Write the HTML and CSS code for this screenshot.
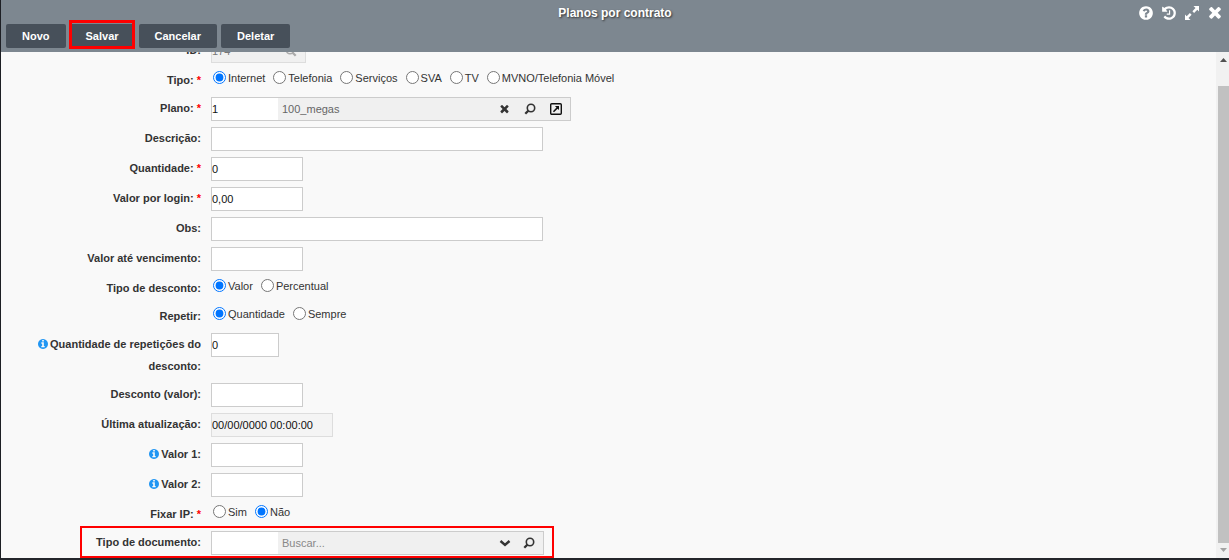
FILE: index.html
```
<!DOCTYPE html>
<html lang="pt-BR">
<head>
<meta charset="utf-8">
<title>Planos por contrato</title>
<link rel="stylesheet" href="styles.css">
</head>
<body>
<svg class="defs" aria-hidden="true">
  <symbol id="search" viewBox="0 0 12 12"><circle cx="7" cy="5" r="3.7" fill="none" stroke="currentColor" stroke-width="1.6"/><path d="M4.4 7.6 1.3 10.7" stroke="currentColor" stroke-width="2.2"/></symbol>
  <symbol id="search-right" viewBox="0 0 12 12"><circle cx="5" cy="5" r="3.7" fill="none" stroke="currentColor" stroke-width="1.6"/><path d="M7.6 7.6 10.700 10.700" stroke="currentColor" stroke-width="2.2"/></symbol>
  <symbol id="times" viewBox="256 368 1280 1312"><path fill="currentColor" d="M1490 1322q0 40-28 68l-136 136q-28 28-68 28t-68-28l-294-294-294 294q-28 28-68 28t-68-28l-136-136q-28-28-28-68t28-68l294-294-294-294q-28-28-28-68t28-68l136-136q28-28 68-28t68 28l294 294 294-294q28-28 68-28t68 28l136 136q28 28 28 68t-28 68l-294 294 294 294q28 28 28 68z"/></symbol>
  <symbol id="info" viewBox="128 128 1536 1536"><path fill="currentColor" d="M1152 1376v-160q0-14-9-23t-23-9h-96v-512q0-14-9-23t-23-9h-320q-14 0-23 9t-9 23v160q0 14 9 23t23 9h96v320h-96q-14 0-23 9t-9 23v160q0 14 9 23t23 9h448q14 0 23-9t9-23zm-128-896v-160q0-14-9-23t-23-9h-192q-14 0-23 9t-9 23v160q0 14 9 23t23 9h192q14 0 23-9t9-23zm640 416q0 209-103 385.500t-279.500 279.500-385.500 103-385.500-103-279.500-279.500-103-385.500 103-385.500 279.500-279.500 385.500-103 385.500 103 279.500 279.500 103 385.500z"/></symbol>
</svg>
<div class="window">
  <header class="header">
    <div class="titlebar">
      <h1 class="title">Planos por contrato</h1>
      <div class="tools">
        <button class="tool" type="button" aria-label="Ajuda"><svg viewBox="0 0 1792 1792"><path fill="currentColor" d="M1024 1376v-192q0-14-9-23t-23-9h-192q-14 0-23 9t-9 23v192q0 14 9 23t23 9h192q14 0 23-9t9-23zm256-672q0-88-55.500-163t-138.500-116-170-41q-243 0-371 213-15 24 8 42l132 100q7 6 19 6 16 0 25-12 53-68 86-92 34-24 86-24 48 0 85.500 26t37.500 59q0 38-20 61t-68 45q-63 28-115.500 86.500t-52.500 125.500v36q0 14 9 23t23 9h192q14 0 23-9t9-23q0-19 21.500-49.500t54.500-49.500q32-18 49-28.500t46-35 44.500-48 28-60.500 12.500-81zm384 192q0 209-103 385.500t-279.500 279.500-385.500 103-385.500-103-279.500-279.500-103-385.500 103-385.500 279.500-279.500 385.500-103 385.500 103 279.500 279.500 103 385.500z"/></svg></button>
        <button class="tool" type="button" aria-label="Histórico"><svg viewBox="0 0 1792 1792"><path fill="currentColor" d="M1664 896q0 156-61 298t-164 245-245 164-298 61q-172 0-327-72.500t-264-204.500q-7-10-6.500-22.500t8.500-20.500l137-138q10-9 25-9 16 2 23 12 73 95 179 147t225 52q104 0 198.500-40.500t163.500-109.500 109.500-163.500 40.500-198.500-40.500-198.500-109.500-163.500-163.500-109.500-198.500-40.500q-98 0-188 35.500t-160 101.500l137 138q31 30 14 69-17 40-59 40h-448q-26 0-45-19t-19-45v-448q0-42 40-59 39-17 69 14l130 129q107-101 244.500-156.500t284.500-55.500q156 0 298 61t245 164 164 245 61 298zm-640-288v448q0 14-9 23t-23 9h-320q-14 0-23-9t-9-23v-64q0-14 9-23t23-9h224v-352q0-14 9-23t23-9h64q14 0 23 9t9 23z"/></svg></button>
        <button class="tool" type="button" aria-label="Expandir"><svg viewBox="0 0 16 16"><path fill="currentColor" d="M9.500 1H15v5.500l-1.700-1.700-3.200 3.200-1.700-1.700 3.100-3.200zM6.500 15H1V9.500l1.700 1.700L5.900 8l1.700 1.700-3.100 3.200z"/></svg></button>
        <button class="tool" type="button" aria-label="Fechar"><svg viewBox="0 0 16 16"><use href="#times" x="1" y="2" width="14" height="13"/></svg></button>
      </div>
    </div>
    <div class="actions">
      <button class="action" type="button">Novo</button>
      <button class="action marked" type="button">Salvar</button>
      <button class="action" type="button">Cancelar</button>
      <button class="action" type="button">Deletar</button>
    </div>
  </header>
  <main class="content">
    <form class="form">
      <div class="row">
        <label class="label" for="id">ID:</label>
        <div class="combo small"><input class="value" id="id" value="174" disabled><button class="icon" type="button" disabled aria-label="Buscar ID"><svg><use href="#search-right"/></svg></button></div>
      </div>
      <div class="row" role="radiogroup" aria-labelledby="tipo">
        <span class="label" id="tipo">Tipo: <b class="req">*</b></span>
        <div class="options">
          <label class="option"><input type="radio" name="tipo" checked>Internet</label>
          <label class="option"><input type="radio" name="tipo">Telefonia</label>
          <label class="option"><input type="radio" name="tipo">Serviços</label>
          <label class="option"><input type="radio" name="tipo">SVA</label>
          <label class="option"><input type="radio" name="tipo">TV</label>
          <label class="option"><input type="radio" name="tipo">MVNO/Telefonia Móvel</label>
        </div>
      </div>
      <div class="row">
        <label class="label" for="plano">Plano: <b class="req">*</b></label>
        <div class="combo wide">
          <input class="code" id="plano" value="1"><input class="value" aria-label="Nome do plano" value="100_megas" readonly>
          <button class="icon" type="button" aria-label="Limpar"><svg viewBox="0 0 12 12"><use href="#times" x="2" y="2" width="9" height="9"/></svg></button>
          <button class="icon" type="button" aria-label="Buscar plano"><svg><use href="#search"/></svg></button>
          <button class="icon" type="button" aria-label="Abrir plano"><svg viewBox="0 0 12 12"><rect x=".7" y=".7" width="10.600" height="10.600" rx="1" fill="none" stroke="#111" stroke-width="1.400"/><path fill="#111" d="M4.900 3h4.100v4.100L7.600 5.700 4 9.300 2.900 8.200l3.600-3.600z"/></svg></button>
        </div>
      </div>
      <div class="row"><label class="label" for="descricao">Descrição:</label><input class="field long" id="descricao"></div>
      <div class="row"><label class="label" for="quantidade">Quantidade: <b class="req">*</b></label><input class="field" id="quantidade" value="0"></div>
      <div class="row"><label class="label" for="login">Valor por login: <b class="req">*</b></label><input class="field" id="login" value="0,00"></div>
      <div class="row"><label class="label" for="obs">Obs:</label><input class="field long" id="obs"></div>
      <div class="row"><label class="label" for="vencimento">Valor até vencimento:</label><input class="field" id="vencimento"></div>
      <div class="row" role="radiogroup" aria-labelledby="tipo-desconto">
        <span class="label" id="tipo-desconto">Tipo de desconto:</span>
        <div class="options">
          <label class="option"><input type="radio" name="desconto" checked>Valor</label>
          <label class="option"><input type="radio" name="desconto">Percentual</label>
        </div>
      </div>
      <div class="row" role="radiogroup" aria-labelledby="repetir">
        <span class="label" id="repetir">Repetir:</span>
        <div class="options">
          <label class="option"><input type="radio" name="repetir" checked>Quantidade</label>
          <label class="option"><input type="radio" name="repetir">Sempre</label>
        </div>
      </div>
      <div class="row"><label class="label" for="repeticoes"><svg class="info"><use href="#info"/></svg>Quantidade de repetições do desconto:</label><input class="field short" id="repeticoes" value="0"></div>
      <div class="row"><label class="label" for="desconto-valor">Desconto (valor):</label><input class="field" id="desconto-valor"></div>
      <div class="row"><label class="label" for="atualizacao">Última atualização:</label><input class="field date" id="atualizacao" value="00/00/0000 00:00:00" readonly></div>
      <div class="row"><label class="label" for="valor1"><svg class="info"><use href="#info"/></svg>Valor 1:</label><input class="field" id="valor1"></div>
      <div class="row"><label class="label" for="valor2"><svg class="info"><use href="#info"/></svg>Valor 2:</label><input class="field" id="valor2"></div>
      <div class="row" role="radiogroup" aria-labelledby="fixar">
        <span class="label" id="fixar">Fixar IP: <b class="req">*</b></span>
        <div class="options">
          <label class="option"><input type="radio" name="fixar">Sim</label>
          <label class="option"><input type="radio" name="fixar" checked>Não</label>
        </div>
      </div>
      <div class="row highlighted">
        <label class="label" for="documento">Tipo de documento:</label>
        <div class="combo">
          <input class="code" id="documento"><input class="value" aria-label="Buscar tipo de documento" placeholder="Buscar...">
          <button class="icon" type="button" aria-label="Abrir lista"><svg viewBox="0 0 12 12"><path d="M1.500 4 6 8l4.500-4" fill="none" stroke="currentColor" stroke-width="2.400"/></svg></button>
          <button class="icon" type="button" aria-label="Buscar documento"><svg><use href="#search"/></svg></button>
        </div>
      </div>
    </form>
    <div class="scrollbar" aria-hidden="true">
      <svg class="arrow" viewBox="0 0 7 4"><path d="M0 4 3.500 0 7 4z" fill="#505050"/></svg>
      <div class="thumb"></div>
      <svg class="arrow" viewBox="0 0 7 4"><path d="M0 0 3.500 4 7 0z" fill="#a3a3a3"/></svg>
    </div>
  </main>
</div>
</body>
</html>
```
FILE: styles.css
```
*, *::before, *::after { box-sizing: border-box; }

body {
  margin: 0;
  font: 11px/22px "Liberation Sans", Arial, sans-serif;
  color: #333;
  background: #24262b;
}

input, button { font: inherit; color: inherit; }

button { padding: 0; border: 0; background: none; }

.defs { position: absolute; width: 0; height: 0; }

.window {
  display: flex;
  flex-direction: column;
  height: 100vh;
  border-left: 1px solid #1d1f24;
  border-bottom: 2px solid #24262b;
}

.header {
  flex: none;
  padding-bottom: 4px;
  background: #7d8790;
}

.titlebar {
  display: grid;
  grid-template-columns: 1fr auto 1fr;
  align-items: center;
  height: 24px;
  padding-top: 2px;
}

.title {
  grid-column: 2;
  margin: 0;
  font-size: 12px;
  color: #fff;
  text-shadow: 1px 1px 2px #333;
}

.tools {
  display: flex;
  justify-content: flex-end;
  gap: 7px;
  padding-right: 6px;
}

.tool { width: 16px; height: 16px; color: #fff; }

.tool svg { display: block; width: 16px; height: 16px; }

.actions { display: flex; gap: 4px; padding-left: 5px; }

.action {
  height: 24px;
  padding: 0 16px;
  border-radius: 2px;
  background: #47505a;
  color: #fff;
  font-weight: bold;
}

.marked { position: relative; }

.marked::after {
  content: "";
  position: absolute;
  inset: -4px 0 -1px -1px;
  border: 3px solid #f00;
}

.content {
  display: flex;
  flex: 1;
  min-height: 0;
  background: #f9f9f9;
}

.form {
  display: flex;
  flex: 1;
  flex-direction: column;
  justify-content: flex-end;
  overflow: hidden;
}

.row {
  display: flex;
  flex: none;
  gap: 10px;
  padding: 3px 0;
}

.label {
  width: 200px;
  padding-left: 34px;
  font-weight: bold;
  text-align: right;
}

.req { color: #f00; }

.info {
  width: 10px;
  height: 10px;
  margin-right: 2px;
  vertical-align: -1px;
  color: #2196f3;
}

.field, .combo {
  height: 24px;
  border: 1px solid #ccc;
  background: #fff;
}

.field { width: 92px; padding: 0; color: #111; }

.short { width: 68px; }

.long { width: 332px; }

.date { width: 122px; border-color: #ddd; background: #f4f4f4; }

.combo {
  display: flex;
  align-items: center;
  width: 333px;
  padding-right: 2px;
  background: #f0f0f0;
}

.combo input {
  height: 22px;
  min-width: 0;
  border: 0;
  background: transparent;
}

.wide { width: 360px; padding-right: 1px; }

.combo .code {
  width: 66px;
  padding: 0;
  background: #fff;
  color: #111;
}

.value { flex: 1; padding: 0 4px; }

.combo .value { color: #666; }

.value::placeholder { color: #888; }

.small { width: 95px; border-color: #ddd; }

.combo.small .value { padding: 0; color: #777; }

.icon {
  display: flex;
  justify-content: center;
  align-items: center;
  width: 24px;
  height: 22px;
}

.wide .icon { width: 26px; }

.icon svg { width: 12px; height: 12px; }

.icon:disabled { color: #aaa; }

.options {
  display: flex;
  gap: 8px;
  height: 22px;
  padding-left: 2px;
}

.option {
  display: flex;
  align-items: center;
  gap: 2px;
  height: 18px;
}

.option input { width: 13px; height: 13px; margin: 0 0 1px; }

.highlighted { position: relative; }

.highlighted::after {
  content: "";
  position: absolute;
  inset: -2px auto 0 79px;
  width: 474px;
  border: 2px solid #f00;
  pointer-events: none;
}

.scrollbar {
  display: flex;
  flex-direction: column;
  align-items: center;
  gap: 5px;
  width: 13px;
  padding: 6px 0 6px 2px;
  background: #f1f1f1;
}

.arrow { width: 7px; height: 4px; margin: 0 2px; }

.scrollbar .arrow:first-child { margin-bottom: 19px; }

.thumb { flex: 1; width: 11px; background: #c1c1c1; }
```
